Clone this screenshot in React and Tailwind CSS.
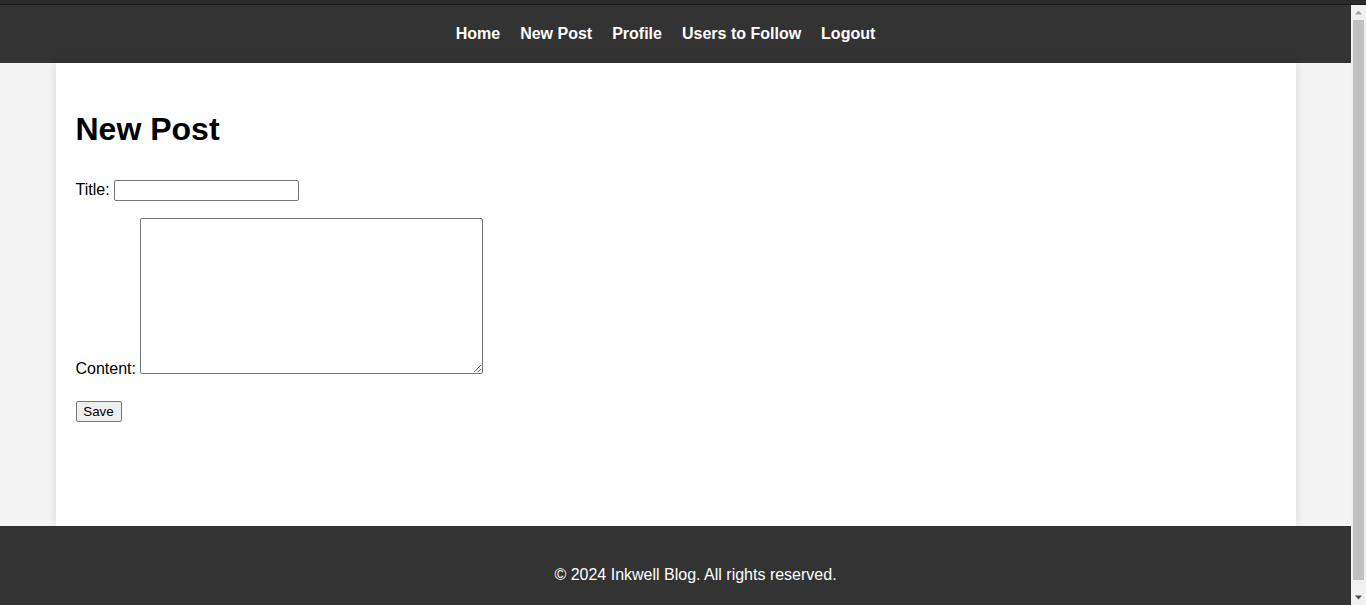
export default function App() {
  const links = ["Home", "New Post", "Profile", "Users to Follow", "Logout"];

  return (
    <div className="h-[605px] flex flex-col bg-[#f4f4f4] font-['Liberation_Sans',Arial,sans-serif] text-[16px] text-black overflow-hidden">
      <div className="h-[4px] bg-[#2b2b2b] shrink-0" />
      <div className="h-px bg-[#1a1a1a] shrink-0" />
      <div className="flex h-[600px]">
        <div className="flex-1 overflow-hidden bg-[#f4f4f4]">
          <nav className="h-[58px] bg-[#333333] flex items-center justify-center">
            {links.map((l) => (
              <a key={l} href="#" className="mr-5 font-bold text-white">
                {l}
              </a>
            ))}
          </nav>

          <main className="max-w-[1200px] box-content mx-auto bg-white px-5 pt-[48px] h-[415px] shadow-[0_0_10px_rgba(0,0,0,0.1)]">
            <h1 className="text-[32px] font-bold leading-[37px] mb-[30px]">New Post</h1>
            <form>
              <div className="mt-4 mb-4">
                <label>Title: </label>
                <input
                  type="text"
                  className="w-[185px] h-[21px] border border-[#767676] rounded-[2px] px-[2px] text-[13.33px] align-baseline"
                />
              </div>
              <div className="mb-4">
                <label>Content: </label>
                <textarea className="w-[343px] h-[156px] border border-[#767676] rounded-[2px] p-[2px] text-[13.33px] font-mono align-baseline inline-block" />
              </div>
              <div className="mt-[18px]">
                <button
                  type="button"
                  className="w-[46px] h-[21px] bg-[#efefef] border border-[#767676] rounded-[2px] text-[13.33px] leading-none"
                >
                  Save
                </button>
              </div>
            </form>
          </main>

          <footer className="bg-[#333333] text-white text-center pt-6 pb-5 pl-[60px] pr-5">
            <p className="my-4 leading-[18px]">© 2024 Inkwell Blog. All rights reserved.</p>
          </footer>
        </div>

        <div className="w-[15px] bg-[#f1f1f1] flex flex-col items-center shrink-0">
          <svg width="15" height="15" viewBox="0 0 15 15" className="shrink-0">
            <path d="M4 9.5 L7.5 5.5 L11 9.5 Z" fill="#a3a3a3" />
          </svg>
          <div className="w-[11px] h-[560px] bg-[#c1c1c1] mx-auto" />
          <div className="flex-1" />
          <svg width="15" height="15" viewBox="0 0 15 15" className="shrink-0">
            <path d="M4 5.5 L7.5 9.5 L11 5.5 Z" fill="#505050" />
          </svg>
        </div>
      </div>
    </div>
  );
}
